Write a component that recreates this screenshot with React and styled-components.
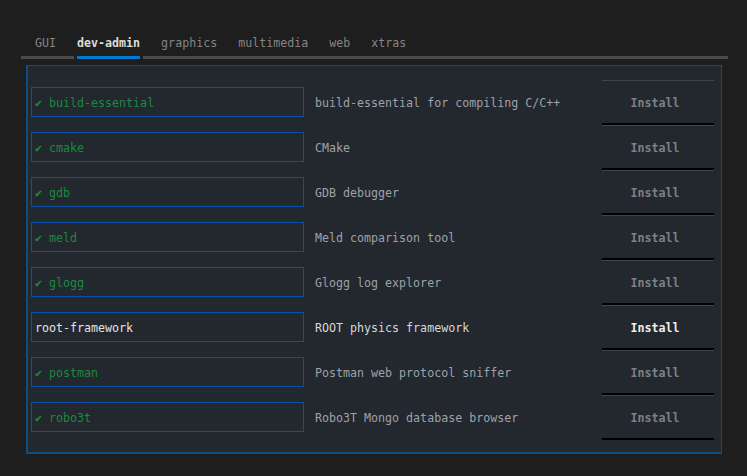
import React from "react";
import styled, { createGlobalStyle } from "styled-components";

const GlobalStyle = createGlobalStyle`
  html, body {
    margin: 0;
    padding: 0;
    background: #1e1e1e;
  }
  body {
    font-family: "DejaVu Sans Mono", "Liberation Mono", monospace;
    font-size: 11.65px;
  }
`;

const Page = styled.div`
  width: 747px;
  height: 476px;
  box-sizing: border-box;
  padding: 35px 19px 0 21px;
  background: #1e1e1e;
`;

const TabBar = styled.div`
  display: flex;
  height: 21px;
  border-bottom: 3px solid #4b4b4b;
  box-sizing: content-box;
`;

const Tab = styled.div`
  position: relative;
  line-height: 16px;
  height: 21px;
  margin-right: 21px;
  padding-left: ${(p) => (p.first ? "14px" : "0")};
  color: ${(p) => (p.active ? "#dcdcdc" : "#858585")};
  font-weight: ${(p) => (p.active ? "bold" : "normal")};
  cursor: pointer;

  ${(p) =>
    p.active &&
    `
    &::after {
      content: "";
      position: absolute;
      left: -3px;
      right: -3px;
      bottom: -3px;
      height: 3px;
      background: #0078d4;
      border-left: 3px solid #1e1e1e;
      border-right: 3px solid #1e1e1e;
      box-sizing: border-box;
    }
  `}
`;

const Panel = styled.div`
  margin: 6px 6px 0 5px;
  border: 1px solid #0f4c84;
  border-left-width: 2px;
  border-bottom-width: 2px;
  background: #23272e;
  padding: 14px 7px 12px 3px;
`;

const Row = styled.div`
  display: grid;
  grid-template-columns: 273px 1fr 112px;
  column-gap: 11px;
  align-items: center;
  height: 45px;
`;

const NameBox = styled.div`
  align-self: start;
  margin-top: 7px;
  height: 30px;
  box-sizing: border-box;
  border: 1px solid #0a4fa8;
  padding: 1px 0 0 3px;
  display: flex;
  align-items: center;
  color: ${(p) => (p.installed ? "#1c8a3e" : "#e4e4e4")};
  white-space: nowrap;
`;

const Description = styled.div`
  padding-top: 1px;
  color: ${(p) => (p.installed ? "#9ea3a8" : "#d8d8d8")};
  white-space: nowrap;
`;

const InstallButton = styled.button`
  height: 45px;
  box-sizing: border-box;
  background: transparent;
  border: none;
  border-top: 1px solid #40454d;
  border-bottom: 2px solid #000;
  font-family: inherit;
  font-size: 11.65px;
  font-weight: bold;
  padding: 1px 6px 0 0;
  color: ${(p) => (p.installed ? "#7c8188" : "#eeeeee")};
  cursor: pointer;
`;

const tabs = ["GUI", "dev-admin", "graphics", "multimedia", "web", "xtras"];

const packages = [
  { name: "build-essential", desc: "build-essential for compiling C/C++", installed: true },
  { name: "cmake", desc: "CMake", installed: true },
  { name: "gdb", desc: "GDB debugger", installed: true },
  { name: "meld", desc: "Meld comparison tool", installed: true },
  { name: "glogg", desc: "Glogg log explorer", installed: true },
  { name: "root-framework", desc: "ROOT physics framework", installed: false },
  { name: "postman", desc: "Postman web protocol sniffer", installed: true },
  { name: "robo3t", desc: "Robo3T Mongo database browser", installed: true },
];

export default function App() {
  return (
    <Page>
      <GlobalStyle />
      <TabBar>
        {tabs.map((t, i) => (
          <Tab key={t} first={i === 0} active={t === "dev-admin"}>
            {t}
          </Tab>
        ))}
      </TabBar>
      <Panel>
        {packages.map((p) => (
          <Row key={p.name}>
            <NameBox installed={p.installed}>
              {p.installed ? `✔ ${p.name}` : p.name}
            </NameBox>
            <Description installed={p.installed}>{p.desc}</Description>
            <InstallButton installed={p.installed}>Install</InstallButton>
          </Row>
        ))}
      </Panel>
    </Page>
  );
}
